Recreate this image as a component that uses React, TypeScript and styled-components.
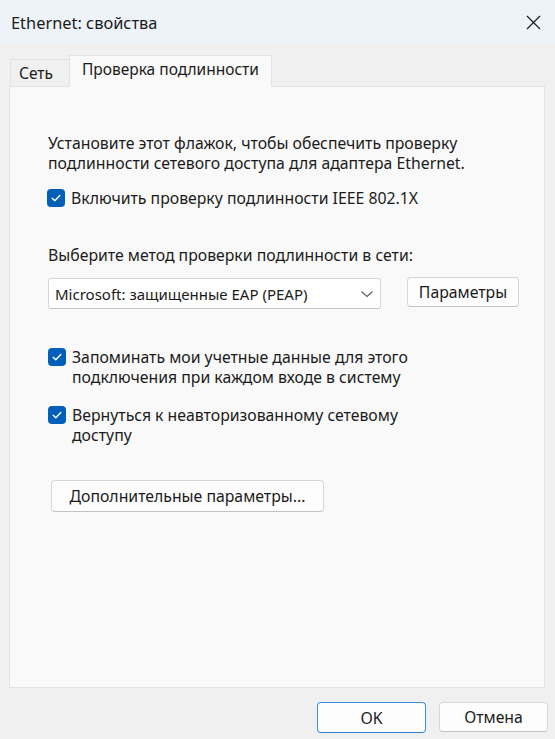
import React from 'react';
import styled, { createGlobalStyle } from 'styled-components';

const GlobalStyle = createGlobalStyle`
  html, body { margin: 0; padding: 0; }
  body {
    font-family: "Noto Sans", "Liberation Sans", sans-serif;
    color: #1b1b1b;
    background: #f0f0f0;
  }
`;

const Window = styled.div`
  width: 555px;
  height: 739px;
  display: flex;
  flex-direction: column;
  background: #f0f0f0;
  overflow: hidden;
`;

const TitleBar = styled.div`
  height: 44px;
  flex: 0 0 44px;
  display: flex;
  align-items: center;
  justify-content: space-between;
  padding: 0 14px 0 11px;
  background: #eef3fa;
  font-size: 16.4px;
`;

const CloseIcon = styled.svg`
  width: 15px;
  height: 15px;
`;

const Body = styled.div`
  display: flex;
  flex-direction: column;
  padding: 11px 10px 0 9px;
`;

const TabRow = styled.div`
  display: flex;
  align-items: flex-end;
  height: 31px;
  padding-left: 1px;
`;

const Tab = styled.div<{ $active?: boolean }>`
  display: flex;
  align-items: center;
  box-sizing: border-box;
  font-size: 15.5px;
  height: ${p => (p.$active ? '32px' : '28px')};
  padding: ${p => (p.$active ? '0 12px 4px 12px' : '0 16px 0 8px')};
  background: ${p => (p.$active ? '#f9f9f9' : '#f0f0f0')};
  border: 1px solid #e3e3e3;
  border-bottom: ${p => (p.$active ? '1px solid #f9f9f9' : '1px solid #e3e3e3')};
  margin-bottom: -1px;
  position: relative;
  z-index: ${p => (p.$active ? 2 : 1)};
  margin-left: ${p => (p.$active ? '-1px' : '0')};
`;

const Panel = styled.div`
  height: 602px;
  box-sizing: border-box;
  background: #f9f9f9;
  border: 1px solid #e3e3e3;
  padding: 46px 20px 0 38px;
  display: flex;
  flex-direction: column;
  align-items: flex-start;
  font-size: 15.8px;
  line-height: 20px;
`;

const Paragraph = styled.p`
  margin: 0;
`;

const CheckRow = styled.label<{ $gap: number; $shift?: number }>`
  display: flex;
  align-items: flex-start;
  margin-top: ${p => p.$gap}px;
  margin-left: ${p => p.$shift ?? 0}px;
`;

const Box = styled.span`
  flex: 0 0 18px;
  width: 18px;
  height: 18px;
  margin: 1px 6px 0 0;
  border-radius: 4px;
  background: #005fb8;
  display: flex;
  align-items: center;
  justify-content: center;
`;

const CaptionLabel = styled.div`
  margin-top: 37px;
`;

const SelectRow = styled.div`
  display: flex;
  align-items: flex-start;
  gap: 26px;
  margin-top: 12px;
`;

const Select = styled.div`
  box-sizing: border-box;
  width: 333px;
  height: 31px;
  margin-top: 1px;
  background: #ffffff;
  border: 1px solid #d6d6d6;
  border-bottom-color: #c4c4c4;
  border-radius: 3px;
  display: flex;
  align-items: center;
  justify-content: space-between;
  padding: 0 6px 0 6px;
  font-size: 15px;
`;

const Button = styled.button<{ $w: number; $default?: boolean }>`
  box-sizing: border-box;
  width: ${p => p.$w}px;
  height: ${p => (p.$default ? 31 : 30)}px;
  font-family: inherit;
  font-size: 15.8px;
  color: #1b1b1b;
  background: #fdfdfd;
  border: 1px solid ${p => (p.$default ? '#3b8de0' : '#d6d6d6')};
  border-bottom-color: ${p => (p.$default ? '#2f7fd4' : '#c2c2c2')};
  border-radius: 4px;
  padding: 0;
`;

const AdvancedButton = styled(Button)`
  margin-top: 35px;
  margin-left: 3px;
  height: 32px;
`;

const Footer = styled.div`
  display: flex;
  justify-content: flex-end;
  gap: 13px;
  padding: 14px 7px 0 0;
`;

const Check = () => (
  <Box>
    <svg width="12" height="12" viewBox="0 0 12 12">
      <path d="M2.2 6.3 L4.8 8.8 L9.8 3.4" fill="none" stroke="#fff" strokeWidth="1.4" strokeLinecap="round" strokeLinejoin="round" />
    </svg>
  </Box>
);

export default function App() {
  return (
    <Window>
      <GlobalStyle />
      <TitleBar>
        <span>Ethernet: свойства</span>
        <CloseIcon viewBox="0 0 15 15">
          <path d="M1 1 L14 14 M14 1 L1 14" stroke="#1b1b1b" strokeWidth="1.2" />
        </CloseIcon>
      </TitleBar>
      <Body>
        <TabRow>
          <Tab>Сеть</Tab>
          <Tab $active>Проверка подлинности</Tab>
        </TabRow>
        <Panel>
          <Paragraph>
            Установите этот флажок, чтобы обеспечить проверку
            <br />
            подлинности сетевого доступа для адаптера Ethernet.
          </Paragraph>
          <CheckRow $gap={15} $shift={-1}>
            <Check />
            <span>Включить проверку подлинности IEEE 802.1X</span>
          </CheckRow>
          <CaptionLabel>Выберите метод проверки подлинности в сети:</CaptionLabel>
          <SelectRow>
            <Select>
              <span>Microsoft: защищенные EAP (PEAP)</span>
              <svg width="14" height="8" viewBox="0 0 14 8">
                <path d="M1.5 1.5 L7 6.5 L12.5 1.5" fill="none" stroke="#5c5c5c" strokeWidth="1.1" />
              </svg>
            </Select>
            <Button $w={112}>Параметры</Button>
          </SelectRow>
          <CheckRow $gap={38}>
            <Check />
            <span>
              Запоминать мои учетные данные для этого
              <br />
              подключения при каждом входе в систему
            </span>
          </CheckRow>
          <CheckRow $gap={18}>
            <Check />
            <span>
              Вернуться к неавторизованному сетевому
              <br />
              доступу
            </span>
          </CheckRow>
          <AdvancedButton $w={273}>Дополнительные параметры...</AdvancedButton>
        </Panel>
      </Body>
      <Footer>
        <Button $w={109} $default>OK</Button>
        <Button $w={109}>Отмена</Button>
      </Footer>
    </Window>
  );
}
